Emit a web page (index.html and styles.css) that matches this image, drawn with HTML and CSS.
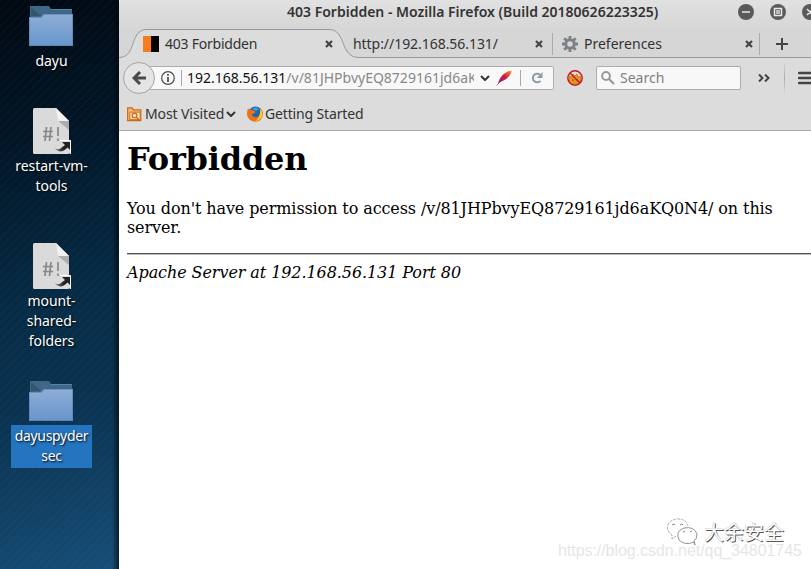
FILE: index.html
```html
<!DOCTYPE html>
<html lang="en">
<head>
<meta charset="utf-8">
<title>403 Forbidden</title>
<link rel="stylesheet" href="styles.css">
</head>
<body>
<svg width="0" height="0" class="defs">
  <defs>
    <linearGradient id="fold" x1="0" y1="0" x2="0" y2="1"><stop offset="0" stop-color="#8eaed6"/><stop offset="1" stop-color="#6795cb"/></linearGradient>
    <linearGradient id="arrow" x1="0" y1="0" x2="1" y2="0"><stop offset="0" stop-color="#999"/><stop offset=".6" stop-color="#222"/></linearGradient>
    <linearGradient id="feather" x1="0" y1="1" x2="1" y2="0"><stop offset="0" stop-color="#7b2a83"/><stop offset=".5" stop-color="#d3173d"/><stop offset="1" stop-color="#f79a23"/></linearGradient>
    <symbol id="folder" viewBox="0 0 44 40">
      <path d="M1 11V0h19l2 3h21v9z" fill="#3f6787"/><path d="M2 1l10 9H2z" fill="#345570"/><path d="M22 3.500h21" stroke="#5984a8"/>
      <path d="M0 11h12l3-3h29v32H0z" fill="url(#fold)"/><path d="M.5 39.500V11.500h12l3-3h28v31z" fill="none" stroke="#537fae" stroke-opacity=".6"/>
    </symbol>
    <symbol id="script" viewBox="0 0 38 46">
      <path d="M1.500 0H23l13 13v31.500a1.500 1.500 0 0 1-1.500 1.500h-33A1.500 1.500 0 0 1 0 44.500v-43A1.500 1.500 0 0 1 1.500 0z" fill="#dadada"/>
      <path d="M23 0l13 13H25z" fill="#f1f1f1"/><path d="M25 13h11v9z" fill="#adadad"/>
      <path d="M13.500 19l-1.500 14M18 19l-1.500 14M10 23.500h10M10 28.500h10M25 19v9M25 30.500V33" stroke="#888" stroke-width="1.700" fill="none"/>
      <path d="M27 32.500h10.500v13H31" fill="#ddd"/><path d="M21 39q3 4 7 1l4-3-3-3h8v8l-2.500-2.500q-8 8-13.500-.5z" fill="url(#arrow)"/><path d="M27 32.500h10.500V46" stroke="#fff" fill="none"/>
    </symbol>
  </defs>
</svg>
<div class="screen">
  <aside class="desktop">
    <div class="item first"><svg class="folder"><use href="#folder"/></svg><span class="label">dayu</span></div>
    <div class="item second"><svg class="file"><use href="#script"/></svg><span class="label">restart-vm-<br>tools</span></div>
    <div class="item third"><svg class="file"><use href="#script"/></svg><span class="label">mount-<br>shared-<br>folders</span></div>
    <div class="item fourth"><svg class="folder"><use href="#folder"/></svg><span class="label selected">dayuspyder<br>sec</span></div>
  </aside>
  <main class="window">
    <header class="titlebar">
      <span class="title">403 Forbidden - Mozilla Firefox (Build 20180626223325)</span>
      <svg class="controls" viewBox="0 0 80 18"><g fill="#5a5a5a"><circle cx="9" cy="9" r="8"/><circle cx="41" cy="9" r="8"/><circle cx="73" cy="9" r="8"/></g><path d="M5 9h8M37.500 5.500h7v7h-7zM70 6l6 6M76 6l-6 6" stroke="#e8e8e8" stroke-width="1.500" fill="none"/><path d="M39 7h4v4h-4z" fill="#bbb"/></svg>
    </header>
    <nav class="tabs">
      <svg class="tabshape" viewBox="0 0 240 29"><path d="M0 28.500C18 28.500 10 .5 28 .5H210C228 .5 220 28.500 240 28.500V29H0z" fill="#dcdcdc"/><path d="M0 28.500C18 28.500 10 .5 28 .5H210C228 .5 220 28.500 240 28.500" fill="none" stroke="#929aa4"/></svg>
      <div class="tab active"><i class="favicon"></i><span class="t1">403 Forbidden</span><svg class="close" viewBox="0 0 8 8"><path d="M1 1l6 6M7 1L1 7"/></svg></div>
      <div class="tab plain"><span class="t2">http://192.168.56.131/</span><svg class="close" viewBox="0 0 8 8"><path d="M1 1l6 6M7 1L1 7"/></svg></div>
      <div class="tab prefs"><svg class="gear" viewBox="0 0 16 16"><circle cx="8" cy="8" r="4.300" fill="none" stroke="#7d8085" stroke-width="3"/><path d="M8 0v3M8 13v3M0 8h3M13 8h3M2.300 2.300l2 2M11.700 11.700l2 2M2.300 13.700l2-2M11.700 4.300l2-2" stroke="#7d8085" stroke-width="2.800"/></svg><span class="t3">Preferences</span><svg class="close" viewBox="0 0 8 8"><path d="M1 1l6 6M7 1L1 7"/></svg></div>
      <div class="newtab"><svg width="12" height="12"><path d="M6 0v12M0 6h12" stroke="#444" stroke-width="2"/></svg></div>
    </nav>
    <div class="toolbar">
      <div class="back"><svg viewBox="0 0 14 14"><path d="M14 7H3M8 1L2 7l6 6" fill="none" stroke="#4b4b4b" stroke-width="3"/></svg></div>
      <div class="address">
        <svg class="info" viewBox="0 0 14 14"><circle cx="7" cy="7" r="6.300" fill="none" stroke="#4a4a4a" stroke-width="1.200"/><path d="M7 6v5M7 3v1.700" stroke="#444" stroke-width="1.700"/></svg>
        <i class="sep"></i><div class="url"><span class="host">192.168.56.131</span><span class="path">/v/81JHPbvyEQ8729161jd6aKQ0N4/</span></div>
        <svg class="drop" viewBox="0 0 10 6"><path d="M1 1l4 4 4-4" stroke="#333" stroke-width="2" fill="none"/></svg>
        <svg class="feather" viewBox="0 0 16 16"><path d="M2 13.500C4 7 8 2 15.500.5 15.500 5 11 9.500 4.500 12z" fill="url(#feather)"/><path d="M.5 15.500L9 7" stroke="#a8316b" stroke-width=".7"/></svg>
        <i class="sep s2"></i>
        <svg class="reload" viewBox="0 0 12 12"><path d="M9.500 8.800A4.300 4.300 0 1 1 9 2.800" fill="none" stroke="#8c9cab" stroke-width="2"/><path d="M11.500 0v6H5.800z" fill="#8c9cab"/></svg>
      </div>
      <svg class="blocked" viewBox="0 0 18 18"><path d="M3 7l3 1 1-3 2 2 2-2 1 3 3-1-.5 6-3 2H6.500L3 13z" fill="#e69721" stroke="#a86716" stroke-width=".6"/><path d="M7 10v2M11 10v2" stroke="#714715"/><circle cx="9" cy="9" r="7.200" fill="none" stroke="#cd1717" stroke-width="1.400"/><path d="M4 4l10 10" stroke="#cd1717" stroke-width="1.400"/></svg>
      <div class="search"><svg viewBox="0 0 14 14"><circle cx="5" cy="5" r="3.900" fill="none" stroke="#999" stroke-width="2"/><path d="M8 8l5 5" stroke="#999" stroke-width="2.200"/></svg><span>Search</span></div>
      <svg class="more" viewBox="0 0 12 8"><path d="M1 .5L4.500 4 1 7.500M7 .5L10.500 4 7 7.500" stroke="#444" stroke-width="2" fill="none"/></svg>
      <i class="toolsep"></i>
      <svg class="burger" viewBox="0 0 16 14"><path d="M1 2h15M1 7h15M1 12h15" stroke="#444" stroke-width="2.500" stroke-linecap="round"/></svg>
    </div>
    <div class="bookmarks">
      <svg class="visited" viewBox="0 0 16 16"><path d="M.7 15V1.500h5l1 2h8V15z" fill="#f5ba78" stroke="#cd6a19" stroke-width="1.300"/><path d="M3 6h11v8H3z" fill="#fbe0b8" stroke="#cd6a19"/><circle cx="8" cy="9.500" r="2.500" fill="none" stroke="#cd6a19" stroke-width="1.300"/><path d="M10 11.500l3 3" stroke="#cd6a19" stroke-width="1.500"/></svg>
      <span class="b1">Most Visited</span><svg class="drop" viewBox="0 0 10 6"><path d="M1 1l4 4 4-4" stroke="#333" stroke-width="2" fill="none"/></svg>
      <svg class="fox" viewBox="0 0 16 16"><circle cx="8.500" cy="7.500" r="7" fill="#1d68b0"/><path d="M5 3q4-3 7 0l-3 2z" fill="#43a0da"/><path d="M1 2.500Q-1 8 1 11.500 4 16 9 15.800 15 15 16 8.500 16 3.500 12 1.500q2.500 3 1.500 6-2 4.500-6 3.500-3-1-2.500-3l3-1V5.500L5.500 4 3 3.500z" fill="#ed7318"/><path d="M13 2.500q5 6 0 10.500-2 2-5 2 6-3 5-12.500z" fill="#ffc928"/></svg>
      <span class="b2">Getting Started</span>
    </div>
    <article class="page">
      <h1>Forbidden</h1>
      <p>You don't have permission to access /v/81JHPbvyEQ8729161jd6aKQ0N4/ on this<br>server.</p>
      <hr>
      <address>Apache Server at 192.168.56.131 Port 80</address>
    </article>
  </main>
</div>
<div class="brand"><svg viewBox="0 0 32 28"><path d="M10 18l-4 3v-4C-2 12 1 2 11 1q9-.5 11 7" fill="none" stroke="#999" stroke-width=".8" stroke-dasharray="3 1"/><path d="M28 24q-9 4-15-2-4-9 5-12 10-2 13 6 0 5-3 7l1 4z" fill="#fff" stroke="#777" stroke-width=".8"/><path d="M6 7l2-1 1 1M14 7l2-1 1 1M17 14l2-1M24 14l2-1" stroke="#888" fill="none"/></svg><span>大余安全</span></div>
<div class="watermark">https://blog.csdn.net/qq_34801745</div>
</body>
</html>
```
FILE: styles.css
```css
* { box-sizing: border-box; }
body { margin: 0; width: 811px; height: 569px; overflow: hidden; background: #fff; font: 14px/20px "Noto Sans", sans-serif; color: #333; }
.defs { position: absolute; }
svg { display: block; flex: none; }
i { flex: none; }
.screen { display: flex; height: 569px; }
.desktop { width: 119px; flex: none; background: linear-gradient(90deg, transparent 112px, rgba(0,5,12,.65) 119px), repeating-linear-gradient(135deg, rgba(70,130,170,.045) 0 2px, transparent 2px 6px), linear-gradient(164deg, #010810 0%, #021627 25%, #062b45 52%, #0b3452 72%, #174e77 100%); }
.item { display: flex; flex-direction: column; align-items: center; width: 103px; color: #fff; text-align: center; }
.first { padding-top: 6px; height: 108px; }
.second { height: 135px; }
.third { height: 138px; }
.folder { width: 44px; height: 40px; margin-right: 1px; }
.file { width: 38px; height: 46px; margin-left: 1px; }
.label { margin-top: 2px; letter-spacing: -.05px; text-shadow: 1px 1px 2px #000; }
.first .label { margin-top: 5px; }
.fourth .label { margin-top: 4px; }
.selected { width: 81px; height: 43px; padding-top: 1px; background: #2474bf; letter-spacing: -.3px; }
.window { flex: 1; min-width: 0; overflow: hidden; background: #fff; border-top-left-radius: 3px; }
.titlebar { display: flex; align-items: center; height: 29px; padding: 0 0 5px 168px; background: linear-gradient(#e1e1e1, #d6d6d6); }
.title { width: 450px; flex: none; white-space: nowrap; font-weight: 600; }
.controls { width: 80px; height: 18px; }
.tabs { position: relative; display: flex; height: 29px; background: #d6d6d6; border-bottom: 1px solid #999; white-space: nowrap; }
.tabshape { position: absolute; left: 0; top: 0; width: 240px; height: 29px; }
.tab { position: relative; display: flex; align-items: center; flex: none; height: 29px; }
.active { width: 229px; padding-left: 24px; }
.favicon { width: 16px; height: 16px; margin-right: 6px; background: linear-gradient(90deg, #f97b20 50%, #000 50%); }
.t1 { width: 160px; letter-spacing: -.23px; }
.plain { width: 205px; padding-left: 5px; }
.t2 { width: 182px; letter-spacing: -.05px; }
.prefs { width: 207px; padding-left: 9px; }
.plain::after, .prefs::after { content: ""; position: absolute; right: 0; top: 4px; width: 1px; height: 22px; background: #aaa; }
.gear { width: 16px; height: 16px; margin-right: 6px; }
.t3 { width: 161px; }
.close { width: 8px; height: 8px; stroke: #444; stroke-width: 2.2; }
.newtab { padding: 9px 0 0 16px; }
.toolbar { display: flex; align-items: center; height: 40px; padding-left: 4px; background: #dcdcdc; }
.back { position: relative; z-index: 1; display: flex; align-items: center; justify-content: center; flex: none; width: 32px; height: 32px; background: #e4e4e4; border: 1px solid #a5a5a5; border-radius: 50%; }
.back svg { width: 14px; height: 14px; }
.address { display: flex; align-items: center; flex: none; width: 405px; height: 24px; margin-left: -6px; padding-left: 11px; background: #f8f8f8; border: 1px solid #adadad; border-radius: 2px; }
.info { width: 14px; height: 14px; }
.sep { width: 1px; height: 16px; margin: 0 5px 0 6px; background: #aaa; }
.url { display: flex; width: 287px; overflow: hidden; white-space: nowrap; }
.host { color: #111; }
.path { color: #888; }
.drop { width: 10px; height: 6px; margin-left: 6px; }
.feather { width: 16px; height: 16px; margin-left: 6px; }
.s2 { margin: 0 10px 0 8px; }
.reload { width: 12px; height: 12px; }
.blocked { width: 18px; height: 18px; margin: 0 12px; }
.search { display: flex; align-items: center; flex: none; width: 145px; height: 24px; padding-left: 4px; background: #f8f8f8; border: 1px solid #adadad; border-radius: 2px; color: #808080; }
.search svg { width: 14px; height: 14px; margin-right: 5px; }
.more { width: 12px; height: 8px; margin-left: 17px; }
.toolsep { width: 1px; height: 34px; margin: 0 13px 0 14px; background: linear-gradient(transparent, #aaa, transparent); }
.burger { width: 16px; height: 14px; }
.bookmarks { display: flex; align-items: center; height: 33px; padding: 0 0 1px 8px; background: #dcdcdc; border-bottom: 1px solid #aaa; white-space: nowrap; }
.visited { width: 15px; height: 16px; margin-right: 3px; }
.b1 { width: 80px; letter-spacing: -.1px; }
.b2 { letter-spacing: -.15px; }
.bookmarks .drop { margin-left: 1px; margin-right: 11px; }
.fox { width: 16px; height: 16px; margin-right: 2px; }
.page { padding: 10px 0 0 8px; font: 16px/19px "DejaVu Serif", serif; color: #000; }
.page h1 { margin: 0 0 21px; font-size: 32px; line-height: 37px; letter-spacing: -.2px; }
.page p { margin: 0 0 16px; white-space: nowrap; letter-spacing: -.1px; }
.page hr { height: 2px; margin: 0 0 8px; border: 0; border-top: 1px solid #555; border-bottom: 1px solid #bbb; }
.page address { font-style: italic; letter-spacing: -.08px; }
.brand { position: absolute; left: 666px; top: 518px; display: flex; align-items: center; gap: 6px; font: 20px/28px "Noto Sans CJK SC", sans-serif; color: #fff; text-shadow: 1px 1px 0 #555, -.3px -.3px 0 #999; white-space: nowrap; }
.brand svg { width: 32px; height: 28px; }
.watermark { position: absolute; left: 558px; top: 541px; font: 16px/20px "Liberation Sans", sans-serif; letter-spacing: -.05px; color: rgba(225,225,225,.85); white-space: nowrap; }
```
